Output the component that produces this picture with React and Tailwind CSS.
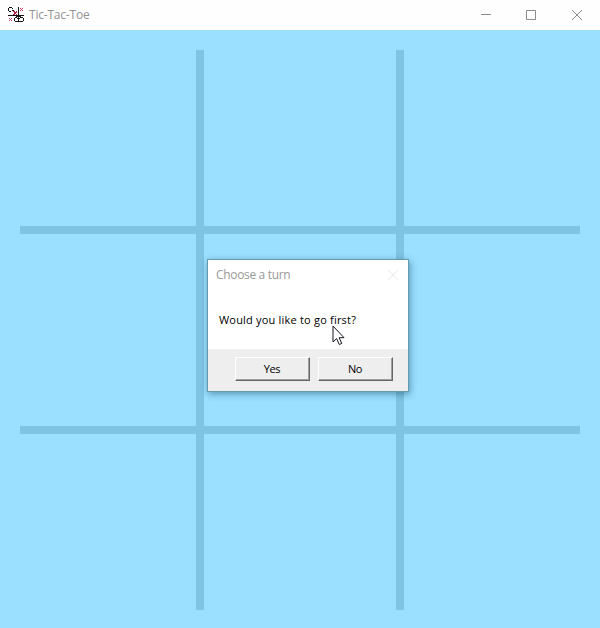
function AppIcon() {
  return (
    <svg className="h-4 w-4 shrink-0" viewBox="0 0 16 16" fill="none" shapeRendering="crispEdges">
      <path d="M.5 1v3M1 .5h3M1 4.5h2M4.5 1v1M4.5 3v1M5 3.5h1" stroke="#111" />
      <path d="M10.5 0v15M0 8.5h16" stroke="#111" />
      <path d="M7 10.5h2M6.5 11v3M7 14.5h3M9.5 11v1M12 10.5h3M11.5 11v1M15.5 11v3M11 14.5h4M8 9.5h5" stroke="#151515" />
      <path d="M12 1h1v1h-1zM14 1h1v1h-1zM13 2h1v1h-1zM12 3h1v1h-1zM14 3h1v1h-1zM1 11h1v1H1zM3 11h1v1H3zM2 12h1v1H2zM1 13h1v1H1zM3 13h1v1H3z" fill="#b9405c" />
      <path d="M5 4h2v1H5zM8 4h1v1H8zM6 5h3v1H6zM6 6h2v1H6zM5 7h2v1H5zM8 7h1v1H8z" fill="#b51f42" />
    </svg>
  );
}

function TitleBar() {
  return (
    <header className="flex h-[30px] items-center bg-[#fefefe] pl-2">
      <AppIcon />
      <h1 className="ml-[5px] font-['Open_Sans','Noto_Sans',sans-serif] text-[12px] leading-4 tracking-[-0.2px] text-[#929292]">
        Tic-Tac-Toe
      </h1>
      <div className="ml-auto flex text-[#8b8b8b]">
        <button aria-label="Minimize" className="flex h-[30px] w-[45px] items-center justify-center pl-px">
          <svg width="10" height="10" fill="none" stroke="currentColor"><path d="M0 4.5h10" /></svg>
        </button>
        <button aria-label="Maximize" className="flex h-[30px] w-[46px] items-center justify-center">
          <svg width="10" height="10" fill="none" stroke="currentColor"><path d="M.5.5h9v9h-9z" /></svg>
        </button>
        <button aria-label="Close" className="flex h-[30px] w-[46px] items-center justify-center">
          <svg width="10" height="10" fill="none" stroke="currentColor"><path d="M0 0l10 10M10 0L0 10" /></svg>
        </button>
      </div>
    </header>
  );
}

function Board() {
  return (
    <main className="grid h-[598px] grid-cols-[176px_8px_192px_8px_176px] grid-rows-[176px_8px_192px_8px_176px] bg-[#9be0ff] p-5">
      <div className="col-start-2 row-span-5 row-start-1 bg-[#7fc4e3]" />
      <div className="col-start-4 row-span-5 row-start-1 bg-[#7fc4e3]" />
      <div className="col-span-5 col-start-1 row-start-2 bg-[#7fc4e3]" />
      <div className="col-span-5 col-start-1 row-start-4 bg-[#7fc4e3]" />
    </main>
  );
}

function DialogButton({ children }) {
  return (
    <button className="flex h-[24px] w-[75px] items-center justify-center border border-b-[#666] border-l-white border-r-[#666] border-t-white bg-[#eee] pr-px text-[11px] font-medium leading-[20px] tracking-[-0.35px] text-black shadow-[inset_-1px_-1px_0_#a0a0a0]">
      {children}
    </button>
  );
}

function Dialog() {
  return (
    <section
      role="dialog"
      className="absolute left-[207px] top-[259px] flex h-[133px] w-[202px] flex-col border border-[#6799ad] bg-white font-['Open_Sans','Noto_Sans',sans-serif] shadow-[1px_2px_7px_rgba(0,55,80,0.45)]"
    >
      <div className="flex h-[30px] items-center justify-between pl-2 pr-[10px]">
        <h2 className="text-[12px] leading-4 tracking-[-0.33px] text-[#999]">Choose a turn</h2>
        <svg width="10" height="10" fill="none" stroke="#e8e8e8"><path d="M0 0l10 10M10 0L0 10" /></svg>
      </div>
      <p className="flex flex-1 items-center pl-[11px] pt-px text-[11px] font-medium leading-4 tracking-[0.2px] text-black">
        Would you like to go first?
      </p>
      <div className="flex h-[42px] justify-end gap-2 bg-[#eee] pr-[15px] pt-2">
        <DialogButton>Yes</DialogButton>
        <DialogButton>No</DialogButton>
      </div>
    </section>
  );
}

function Cursor() {
  return (
    <svg className="absolute left-[332px] top-[325px]" width="13" height="21" viewBox="0 0 13 21">
      <path d="M1 1v16l3.6-3.4L7.3 19.5l2.5-1.1-2.7-5.7H12z" fill="white" stroke="#171520" />
    </svg>
  );
}

export default function App() {
  return (
    <div className="relative h-[628px] w-[600px] overflow-hidden">
      <TitleBar />
      <Board />
      <Dialog />
      <Cursor />
    </div>
  );
}
